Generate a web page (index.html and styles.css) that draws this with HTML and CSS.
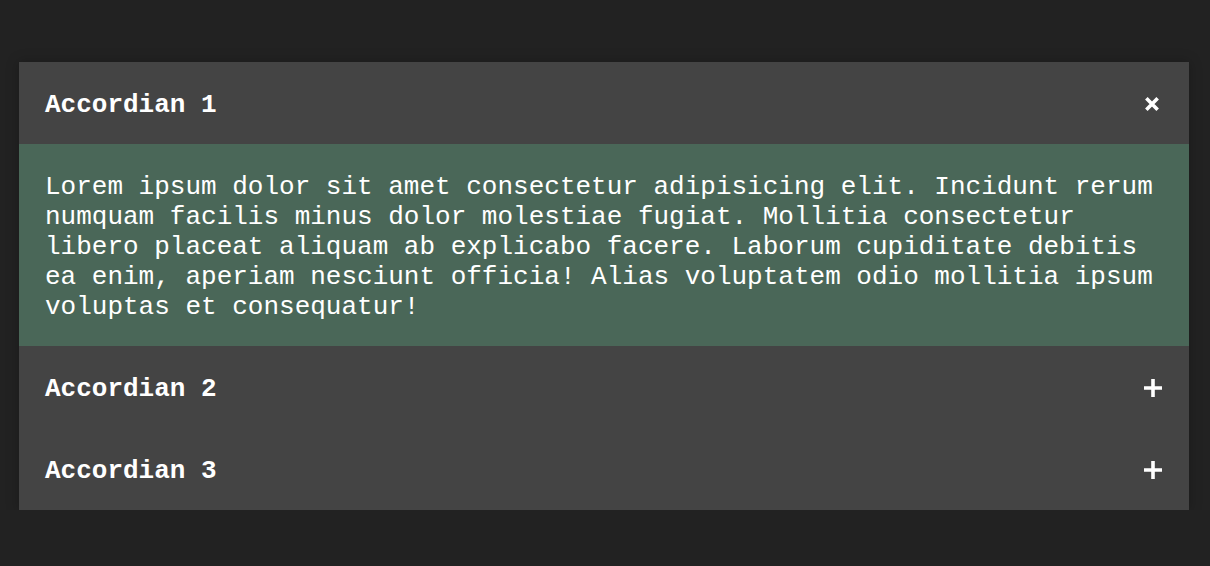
FILE: index.html
```html
<!DOCTYPE html>
<html lang="en">
<head>
<meta charset="utf-8">
<title>Accordion</title>
<link rel="stylesheet" href="styles.css">
</head>
<body>
<div class="accordion">
  <div class="item open">
    <div class="head">
      <span class="title">Accordian 1</span>
      <svg class="icon close" width="18" height="18" viewBox="0 0 18 18"><path d="M9 1v16M1 9h16" stroke="#fff" stroke-width="3.6" fill="none"/></svg>
    </div>
    <div class="body">Lorem ipsum dolor sit amet consectetur adipisicing elit. Incidunt rerum numquam facilis minus dolor molestiae fugiat. Mollitia consectetur libero placeat aliquam ab explicabo facere. Laborum cupiditate debitis ea enim, aperiam nesciunt officia! Alias voluptatem odio mollitia ipsum voluptas et consequatur!</div>
  </div>
  <div class="item">
    <div class="head">
      <span class="title">Accordian 2</span>
      <svg class="icon" width="18" height="18" viewBox="0 0 18 18"><path d="M9 0v18M0 9h18" stroke="#fff" stroke-width="3.6" fill="none"/></svg>
    </div>
  </div>
  <div class="item">
    <div class="head">
      <span class="title">Accordian 3</span>
      <svg class="icon" width="18" height="18" viewBox="0 0 18 18"><path d="M9 0v18M0 9h18" stroke="#fff" stroke-width="3.6" fill="none"/></svg>
    </div>
  </div>
</div>
</body>
</html>
```
FILE: styles.css
```css
html, body {
  margin: 0;
  padding: 0;
  background: #222222;
}
body {
  font-family: "Liberation Mono", "Courier New", monospace;
  font-size: 26px;
  color: #ffffff;
  padding-top: 62px;
}
.accordion {
  width: 1170px;
  margin-left: 19px;
  background: #444444;
  box-shadow: 0 0 12px rgba(0, 0, 0, 0.25);
}
.head {
  display: flex;
  align-items: center;
  justify-content: space-between;
  height: 82px;
  padding: 0 26px;
  box-sizing: border-box;
  background: #444444;
}
.title {
  font-weight: bold;
  line-height: 30px;
  padding-top: 4px;
}
.icon {
  display: block;
  margin-right: 1px;
  margin-top: 2px;
}
.icon.close {
  transform: rotate(45deg);
  margin-right: 2px;
}
.body {
  background: #4a6758;
  padding: 28px 26px 24px;
  line-height: 30px;
}
```
